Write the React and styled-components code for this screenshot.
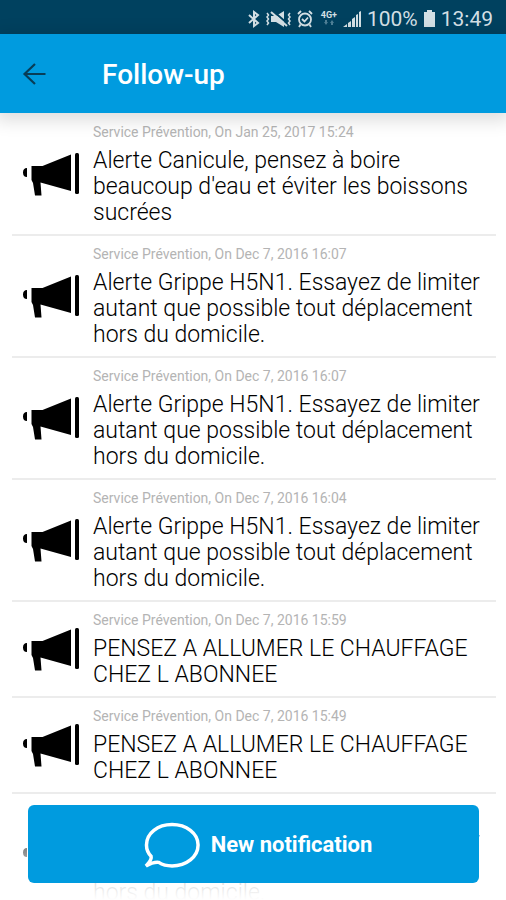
import React from "react";
import styled, { createGlobalStyle } from "styled-components";

const BLUE = "#009bdf";

const GlobalStyle = createGlobalStyle`
  * { box-sizing: border-box; }
  body {
    margin: 0;
    background: #fff;
    color: #000;
    font-family: Roboto, "Liberation Sans", sans-serif;
  }
`;

const Screen = styled.div`
  position: relative;
  display: flex;
  flex-direction: column;
  height: 100vh;
  overflow: hidden;
`;

const StatusBar = styled.div`
  display: flex;
  flex: none;
  align-items: center;
  justify-content: flex-end;
  gap: 5px;
  height: 34px;
  padding: 3px 13px 0 0;
  background: #00415f;
  color: #d3dfe4;
  font-size: 21px;
  line-height: 24px;

  svg {
    display: block;
    flex: none;
  }
`;

const AppBar = styled.header`
  position: relative;
  z-index: 1;
  display: flex;
  flex: none;
  align-items: center;
  gap: 54px;
  height: 79px;
  padding: 2px 20px 0;
  background: ${BLUE};
  box-shadow: 0 4px 16px 4px rgba(0, 0, 0, 0.13);
`;

const BackButton = styled.button`
  display: flex;
  padding: 0;
  border: 0;
  background: none;
  color: #083d57;
`;

const Title = styled.h1`
  margin: 0;
  color: #fff;
  font-size: 28px;
  font-weight: 500;
  line-height: 32px;
`;

const List = styled.ul`
  flex: 1;
  min-height: 0;
  margin: 0;
  padding: 1px 10px 0 12px;
  overflow-y: auto;
  list-style: none;
  scrollbar-width: none;
`;

const Item = styled.li`
  display: flex;
  align-items: center;
  gap: 12px;
  padding: 10px 0 8px 10px;
  border-bottom: 2px solid #ececec;

  svg {
    flex: none;
  }
`;

const ItemBody = styled.div`
  flex: 1;
  min-width: 0;
`;

const Meta = styled.div`
  margin-bottom: 8px;
  color: #b4b4b4;
  font-size: 14px;
  line-height: 16px;
`;

const Message = styled.p`
  margin: 0;
  font-size: 23px;
  font-weight: 300;
  line-height: 26px;
`;

const Footer = styled.footer`
  position: absolute;
  right: 0;
  bottom: 0;
  left: 0;
  z-index: 1;
  padding: 12px 27px 17px 28px;
  background: linear-gradient(
    rgba(255, 255, 255, 0),
    rgba(255, 255, 255, 0.5) 50%,
    rgba(255, 255, 255, 0.88) 85%,
    #fff
  );
`;

const NewButton = styled.button`
  display: flex;
  align-items: center;
  justify-content: center;
  gap: 10px;
  width: 100%;
  height: 78px;
  padding: 2px 0 0 6px;
  border: 0;
  border-radius: 6px;
  background: ${BLUE};
  color: #fff;
  font: 700 22px/28px Roboto, "Liberation Sans", sans-serif;
`;

const Bluetooth = () => (
  <svg width="12" height="18" viewBox="0 0 12 18" fill="none" stroke="currentColor" strokeWidth="2" aria-hidden="true">
    <path d="M1 5l9 8-4 3V2l4 3-9 8" />
  </svg>
);

const Muted = () => (
  <svg width="27" height="18" viewBox="0 0 27 18" aria-hidden="true">
    <path d="M6 6h5l8-5v16l-8-5H6z" fill="currentColor" />
    <path d="M8 1l15 13" stroke="#00415f" strokeWidth="2" />
    <path d="M6 2l16 14" stroke="currentColor" strokeWidth="2" />
    <path d="M2 3l1.500 2L2 7l1.500 2L2 11l1.500 2L2 15M25 3l-1.500 2L25 7l-1.500 2L25 11l-1.500 2L25 15" fill="none" stroke="currentColor" strokeWidth="1.500" />
  </svg>
);

const Alarm = () => (
  <svg width="16" height="18" viewBox="0 0 16 18" fill="none" stroke="currentColor" strokeWidth="1.800" aria-hidden="true">
    <circle cx="8" cy="9.500" r="6" />
    <path d="M1 4l3-3M15 4l-3-3M3.500 14.500L2 17M12.500 14.500L14 17M5 9l2.500 2.500L11 7.500" />
  </svg>
);

const NetworkLabel = styled.span`
  display: flex;
  flex-direction: column;
  align-items: center;
  width: 18px;
  margin-left: 2px;
  font-size: 9px;
  font-weight: 700;
  line-height: 9px;
`;

const DataArrows = () => (
  <svg width="10" height="6" viewBox="0 0 10 6" fill="#4f7f96" aria-hidden="true">
    <path d="M0 2h1V0h2v2h1L2 5zM6 3l2-3 2 3H9v2H7V3z" />
  </svg>
);

const Signal = () => (
  <svg width="19" height="18" viewBox="0 0 19 18" fill="currentColor" aria-hidden="true">
    <path d="M0 17l4-3v3zM5 13l3-2v6H5zM9 9l3-2v10H9zM13 5l2-1v13h-2zM16 2l2-1v16h-2z" />
  </svg>
);

const Battery = () => (
  <svg width="13" height="18" viewBox="0 0 13 18" fill="currentColor" aria-hidden="true">
    <path d="M4 0h5v2h3v15H1V2h3z" />
  </svg>
);

const Arrow = () => (
  <svg width="28" height="24" viewBox="0 0 28 24" fill="none" stroke="currentColor" strokeWidth="2.200" aria-hidden="true">
    <path d="M25.500 11H4.500M15 1L4.500 11 15 21" />
  </svg>
);

const Megaphone = () => (
  <svg width="59" height="46" viewBox="0 1 59 46" fill="#000" aria-hidden="true">
    <path d="M5 17v9Q1 26 1 21.500T5 17zM9.500 15h11L49 3.500V40L18.500 31.500 19.500 44.500H13L11 32 9.500 29z" />
    <rect x="53" y="2" width="4" height="41" rx="1.500" />
  </svg>
);

const Bubble = () => (
  <svg width="60" height="47" viewBox="0 0 58 46" fill="none" stroke="currentColor" strokeWidth="3.400" aria-hidden="true">
    <path d="M9.500 33.500C6.500 30.500 5 26.500 5 22.500 5 11 16 2.500 30 2.500S55.500 11 55.500 22.500 44 43 30 43c-5 0-9.500-1.200-13-3.500-4-.5-8 1-12.500 3.500 3-3.500 6-6 5-9.500z" />
  </svg>
);

const FLU = "Alerte Grippe H5N1. Essayez de limiter autant que possible tout déplacement hors du domicile.";
const HEATING = "PENSEZ A ALLUMER LE CHAUFFAGE CHEZ L ABONNEE";

const notifications = [
  { date: "Jan 25, 2017 15:24", text: "Alerte Canicule, pensez à boire beaucoup d'eau et éviter les boissons sucrées" },
  { date: "Dec 7, 2016 16:07", text: FLU },
  { date: "Dec 7, 2016 16:07", text: FLU },
  { date: "Dec 7, 2016 16:04", text: FLU },
  { date: "Dec 7, 2016 15:59", text: HEATING },
  { date: "Dec 7, 2016 15:49", text: HEATING },
  { date: "Dec 7, 2016 15:49", text: FLU },
];

export default function App() {
  return (
    <Screen>
      <GlobalStyle />
      <StatusBar>
        <Bluetooth />
        <Muted />
        <Alarm />
        <NetworkLabel>
          4G+
          <DataArrows />
        </NetworkLabel>
        <Signal />
        <span>100%</span>
        <Battery />
        <span>13:49</span>
      </StatusBar>
      <AppBar>
        <BackButton aria-label="Back">
          <Arrow />
        </BackButton>
        <Title>Follow-up</Title>
      </AppBar>
      <List>
        {notifications.map((n, i) => (
          <Item key={i}>
            <Megaphone />
            <ItemBody>
              <Meta>Service Prévention, On {n.date}</Meta>
              <Message>{n.text}</Message>
            </ItemBody>
          </Item>
        ))}
      </List>
      <Footer>
        <NewButton>
          <Bubble />
          New notification
        </NewButton>
      </Footer>
    </Screen>
  );
}
